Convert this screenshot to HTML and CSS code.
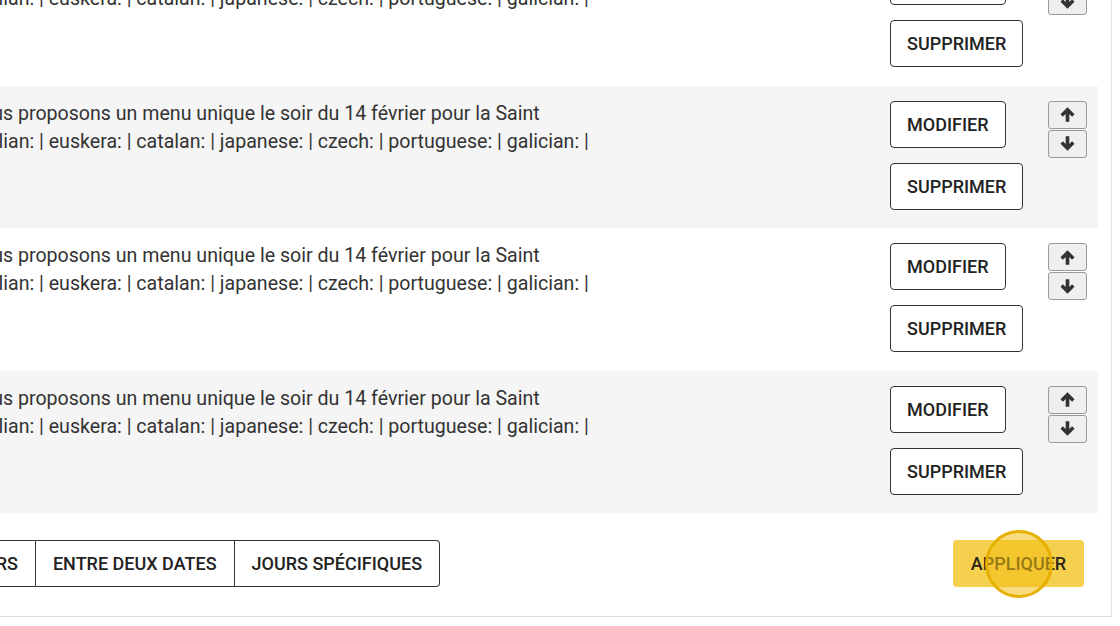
FILE: index.html
```html
<!DOCTYPE html>
<html lang="fr">
<head>
  <meta charset="UTF-8">
  <title>Messages</title>
  <link rel="stylesheet" href="styles.css">
</head>
<body>
  <div class="panel">
    <div class="message-list">
      <div class="message-row">
        <div class="message-text">
          <div>Nous proposons un menu unique le soir du 14 février pour la Saint</div>
          <div>| italian: | euskera: | catalan: | japanese: | czech: | portuguese: | galician: |</div>
        </div>
        <div class="actions">
          <button class="btn">Modifier</button>
          <button class="btn">Supprimer</button>
        </div>
        <div class="order">
          <button class="order-btn"><svg viewBox="0 0 14 14"><path d="M7 1 L1.2 6.8 L3.2 8.8 L5.5 6.5 V13 H8.5 V6.5 L10.8 8.8 L12.8 6.8 Z"/></svg></button>
          <button class="order-btn"><svg viewBox="0 0 14 14"><path d="M7 13 L1.2 7.2 L3.2 5.2 L5.5 7.5 V1 H8.5 V7.5 L10.8 5.2 L12.8 7.2 Z"/></svg></button>
        </div>
      </div>
      <div class="message-row">
        <div class="message-text">
          <div>Nous proposons un menu unique le soir du 14 février pour la Saint</div>
          <div>| italian: | euskera: | catalan: | japanese: | czech: | portuguese: | galician: |</div>
        </div>
        <div class="actions">
          <button class="btn">Modifier</button>
          <button class="btn">Supprimer</button>
        </div>
        <div class="order">
          <button class="order-btn"><svg viewBox="0 0 14 14"><path d="M7 1 L1.2 6.8 L3.2 8.8 L5.5 6.5 V13 H8.5 V6.5 L10.8 8.8 L12.8 6.8 Z"/></svg></button>
          <button class="order-btn"><svg viewBox="0 0 14 14"><path d="M7 13 L1.2 7.2 L3.2 5.2 L5.5 7.5 V1 H8.5 V7.5 L10.8 5.2 L12.8 7.2 Z"/></svg></button>
        </div>
      </div>
      <div class="message-row">
        <div class="message-text">
          <div>Nous proposons un menu unique le soir du 14 février pour la Saint</div>
          <div>| italian: | euskera: | catalan: | japanese: | czech: | portuguese: | galician: |</div>
        </div>
        <div class="actions">
          <button class="btn">Modifier</button>
          <button class="btn">Supprimer</button>
        </div>
        <div class="order">
          <button class="order-btn"><svg viewBox="0 0 14 14"><path d="M7 1 L1.2 6.8 L3.2 8.8 L5.5 6.5 V13 H8.5 V6.5 L10.8 8.8 L12.8 6.8 Z"/></svg></button>
          <button class="order-btn"><svg viewBox="0 0 14 14"><path d="M7 13 L1.2 7.2 L3.2 5.2 L5.5 7.5 V1 H8.5 V7.5 L10.8 5.2 L12.8 7.2 Z"/></svg></button>
        </div>
      </div>
      <div class="message-row">
        <div class="message-text">
          <div>Nous proposons un menu unique le soir du 14 février pour la Saint</div>
          <div>| italian: | euskera: | catalan: | japanese: | czech: | portuguese: | galician: |</div>
        </div>
        <div class="actions">
          <button class="btn">Modifier</button>
          <button class="btn">Supprimer</button>
        </div>
        <div class="order">
          <button class="order-btn"><svg viewBox="0 0 14 14"><path d="M7 1 L1.2 6.8 L3.2 8.8 L5.5 6.5 V13 H8.5 V6.5 L10.8 8.8 L12.8 6.8 Z"/></svg></button>
          <button class="order-btn"><svg viewBox="0 0 14 14"><path d="M7 13 L1.2 7.2 L3.2 5.2 L5.5 7.5 V1 H8.5 V7.5 L10.8 5.2 L12.8 7.2 Z"/></svg></button>
        </div>
      </div>
    </div>

    <div class="footer">
      <div class="tabs">
        <button class="tab">Tous les jours</button>
        <button class="tab">Entre deux dates</button>
        <button class="tab">Jours spécifiques</button>
      </div>
      <div class="apply-wrap">
        <button class="btn-apply">Appliquer</button>
        <div class="click-marker"></div>
      </div>
    </div>
  </div>
</body>
</html>
```

FILE: styles.css
```css
* {
  margin: 0;
  padding: 0;
  box-sizing: border-box;
}

body {
  font-family: Roboto, 'Liberation Sans', sans-serif;
  background: #ffffff;
  color: #333333;
  width: 1120px;
  height: 626px;
  overflow: hidden;
}

.panel {
  margin: -57px 0 0 -200px;
  width: 1312px;
  padding-right: 13px;
  border-right: 1px solid #e2e2e2;
  border-bottom: 1px solid #dcdcdc;
  background: #ffffff;
}

.message-row {
  display: flex;
  align-items: flex-start;
  height: 142.5px;
  padding: 15px 11px 0 167px;
}

.message-row:nth-child(even) {
  background: #f5f5f5;
}

.message-text {
  flex: 1;
  font-size: 19.6px;
  line-height: 28px;
  color: #333333;
  white-space: nowrap;
  overflow: hidden;
  margin-top: -1px;
}

.actions {
  display: flex;
  flex-direction: column;
  align-items: flex-start;
  gap: 15px;
  width: 136px;
  margin-right: 22px;
}

.btn {
  height: 47px;
  padding: 0 16px;
  background: #ffffff;
  border: 1px solid #333333;
  border-radius: 4px;
  font-family: inherit;
  font-size: 18px;
  font-weight: 500;
  color: #222222;
  text-transform: uppercase;
}

.order {
  display: flex;
  flex-direction: column;
  gap: 1px;
}

.order-btn {
  width: 39px;
  height: 28px;
  background: #efefef;
  border: 1px solid #9a9a9a;
  border-radius: 3px;
  display: flex;
  align-items: center;
  justify-content: center;
}

.order-btn svg {
  width: 17px;
  height: 17px;
  fill: #333333;
}

.footer {
  display: flex;
  align-items: center;
  justify-content: space-between;
  padding: 27px 14px 29px 58px;
}

.tabs {
  display: flex;
}

.tab {
  height: 47px;
  padding: 0 17px;
  background: #ffffff;
  border: 1px solid #333333;
  font-family: inherit;
  font-size: 18px;
  font-weight: 500;
  color: #222222;
  text-transform: uppercase;
}

.tab + .tab {
  border-left: none;
}

.tab:first-child {
  border-radius: 4px 0 0 4px;
}

.tab:last-child {
  border-radius: 0 4px 4px 0;
}

.apply-wrap {
  position: relative;
}

.btn-apply {
  width: 131px;
  height: 47px;
  background: #f5d04e;
  border: none;
  border-radius: 4px;
  font-family: inherit;
  font-size: 18px;
  font-weight: 500;
  color: #2b2518;
  text-transform: uppercase;
}

.click-marker {
  position: absolute;
  left: 32px;
  top: -10px;
  width: 68px;
  height: 68px;
  border-radius: 50%;
  border: 3px solid #e5b000;
  background: rgba(240, 190, 20, 0.55);
  pointer-events: none;
}
```
